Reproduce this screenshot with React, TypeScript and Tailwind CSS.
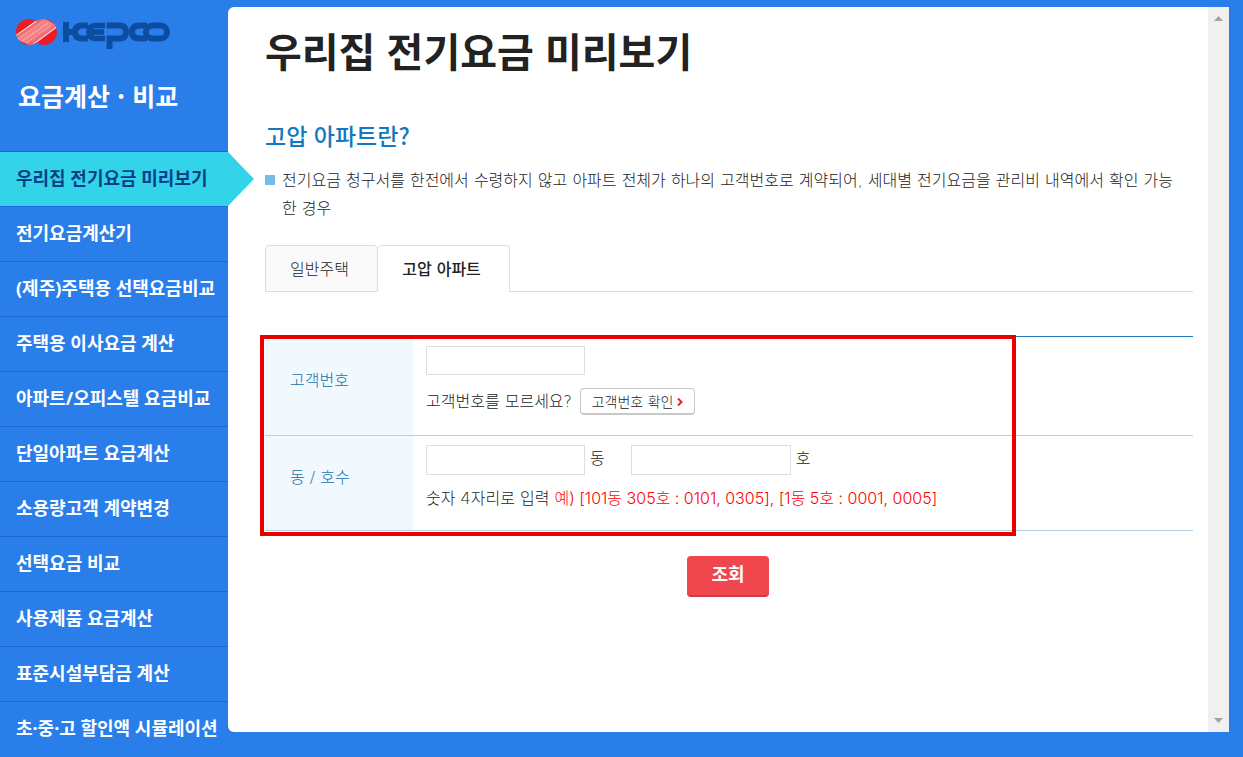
import React, { useState } from "react";

const menuItems = [
  "우리집 전기요금 미리보기",
  "전기요금계산기",
  "(제주)주택용 선택요금비교",
  "주택용 이사요금 계산",
  "아파트/오피스텔 요금비교",
  "단일아파트 요금계산",
  "소용량고객 계약변경",
  "선택요금 비교",
  "사용제품 요금계산",
  "표준시설부담금 계산",
  "초·중·고 할인액 시뮬레이션",
];

const tabs = ["일반주택", "고압 아파트"];

const KepcoLogo: React.FC = () => (
  <svg width="156" height="32" viewBox="0 0 156 32" role="img" aria-label="KEPCO">
    <defs>
      <clipPath id="discs">
        <circle cx="14" cy="15" r="13" />
        <circle cx="29" cy="15" r="13" />
      </clipPath>
      <linearGradient id="sheen" x1="0" y1="0" x2="1" y2="1">
        <stop offset="0.2" stopColor="#f04a50" />
        <stop offset="0.5" stopColor="#f58a8a" />
        <stop offset="0.8" stopColor="#f04a50" />
      </linearGradient>
    </defs>
    <g clipPath="url(#discs)">
      <rect width="44" height="30" fill="#ee1c25" />
      <path d="M-1 21L27 0L43 9L16 29z" fill="url(#sheen)" />
      <path
        d="M3 22L29 4M7 24L33 6M11 26L37 8"
        stroke="#fbd0d0"
        strokeWidth="1"
        strokeDasharray="1 1"
      />
      <path d="M-1 20L27 0M16 29L43 9" stroke="#e8d8e8" strokeWidth="1.2" />
    </g>
    <g fill="none" stroke="#0d4da1" strokeWidth="6">
      <path d="M51 5v20M73 8.500h-5q-8 0-8 6.500t8 6.500h5M51 15h9" />
      <path d="M90 8.500h-9q-7 0-7 6.500t7 6.500h9M75 15h14" strokeWidth="5.5" />
      <path d="M94.500 32V21.500h10q6.500 0 6.500-6.500t-6.500-6.500H91.500" />
      <path d="M132 8.500h-7q-8 0-8 6.500t8 6.500h7" />
      <rect x="131" y="8.500" width="21" height="13" rx="6.500" />
    </g>
  </svg>
);

const Sidebar: React.FC = () => (
  <aside className="w-[228px] shrink-0">
    <div className="h-[152px] border-b border-[#1a68d8] px-[15px] pt-[17px]">
      <KepcoLogo />
      <h2 className="mt-[26px] pl-[3px] text-[25px] font-bold leading-10 whitespace-nowrap text-white">
        요금계산 · 비교
      </h2>
    </div>
    <nav>
      <ul>
        {menuItems.map((item, i) => (
          <li
            key={item}
            className={
              i === 0
                ? "relative h-[55px] border-b border-[#1a68d8] bg-[#33d3ea] text-[#0b3f85]"
                : "h-[55px] border-b border-[#1a68d8] text-white last:border-b-0"
            }
          >
            <a
              href="#"
              className="block pl-4 font-['Noto_Sans','Noto_Sans_CJK_KR',sans-serif] text-[18px] font-bold leading-[52px] whitespace-nowrap"
            >
              {item}
            </a>
            {i === 0 && (
              <svg
                className="absolute top-0 left-full"
                width="26"
                height="54"
                viewBox="0 0 26 54"
                aria-hidden="true"
              >
                <path d="M0 0l26 27L0 54z" fill="#33d3ea" />
              </svg>
            )}
          </li>
        ))}
      </ul>
    </nav>
  </aside>
);

const Tabs: React.FC = () => {
  const [active, setActive] = useState(1);

  return (
    <div className="mt-[22px] flex h-[47px]" role="tablist">
      {tabs.map((tab, i) => (
        <button
          key={tab}
          role="tab"
          aria-selected={active === i}
          onClick={() => setActive(i)}
          className={
            active === i
              ? "w-[132px] rounded-t-sm border-t border-r border-[#dedede] bg-white pt-[2px] pr-1 text-base font-medium text-[#222]"
              : "w-[113px] rounded-t-sm border border-[#dcdcdc] bg-[#fafafa] pt-[2px] pr-1 text-base font-light text-[#222]"
          }
        >
          {tab}
        </button>
      ))}
      <div className="flex-1 border-b border-[#dcdcdc]" />
    </div>
  );
};

const CustomerForm: React.FC = () => (
  <form onSubmit={(e) => e.preventDefault()}>
    <div className="relative mt-11">
      <table className="w-full border-t border-[#1b7bbd] text-base font-light text-[#222]">
        <tbody>
          <tr className="h-[99px] border-b border-[#b8d0e0]">
            <th className="w-[148px] bg-[#f1f9ff] pb-[10px] pl-[25px] text-left font-light text-[#1770aa]">
              <label htmlFor="customer">고객번호</label>
            </th>
            <td className="pt-[9px] pl-[13px] align-top">
              <input
                id="customer"
                type="text"
                className="block h-[29px] w-[159px] border border-[#dedede] px-2"
              />
              <div className="mt-[13px] flex items-center gap-2">
                <span>고객번호를 모르세요?</span>
                <button
                  type="button"
                  className="flex h-[27px] w-[115px] items-center justify-center gap-1 rounded-sm border border-b-2 border-[#c8c8c8] bg-white pt-[2px] text-sm font-light"
                >
                  고객번호 확인
                  <svg width="6" height="8" viewBox="0 0 6 8" aria-hidden="true">
                    <path d="M1 0.500l3.500 3.500L1 7.500" fill="none" stroke="#e3262d" strokeWidth="2" />
                  </svg>
                </button>
              </div>
            </td>
          </tr>
          <tr className="h-[95px] border-b border-[#b8d0e0]">
            <th className="bg-[#f1f9ff] pb-[10px] pl-[25px] text-left font-light text-[#1770aa]">
              동 / 호수
            </th>
            <td className="pt-[9px] pl-[13px] align-top">
              <div className="flex items-center">
                <input
                  id="dong"
                  type="text"
                  className="h-[30px] w-[159px] border border-[#dedede] px-2"
                />
                <label htmlFor="dong" className="mr-[26px] ml-[5px] pb-[2px]">
                  동
                </label>
                <input
                  id="ho"
                  type="text"
                  className="h-[30px] w-[160px] border border-[#dedede] px-2"
                />
                <label htmlFor="ho" className="ml-[5px] pb-[2px]">
                  호
                </label>
              </div>
              <p className="mt-[11px]">
                숫자 4자리로 입력{" "}
                <span className="font-['Inter','Noto_Sans_CJK_KR',sans-serif] text-[#ff0000]">
                  예) [101동 305호 : 0101, 0305], [1동 5호 : 0001, 0005]
                </span>
              </p>
            </td>
          </tr>
        </tbody>
      </table>
      {/* Highlight around the fields to fill in */}
      <div className="pointer-events-none absolute -top-px -bottom-[5px] -left-[5px] w-[756px] border-4 border-[#eb0000]" />
    </div>
    <div className="mt-[25px] flex justify-center pr-[2px]">
      <button
        type="submit"
        className="h-[41px] w-[82px] rounded-sm border-b-2 border-[#cf3a42] bg-[#f0474f] pb-[2px] text-lg font-bold text-white"
      >
        조회
      </button>
    </div>
  </form>
);

const ScrollBar: React.FC = () => (
  <div className="flex w-[21px] shrink-0 flex-col items-center justify-between bg-[#f0f0f0] py-[9px]">
    <svg width="9" height="5" viewBox="0 0 9 5" aria-hidden="true">
      <path d="M0 5l4.500-5L9 5z" fill="#a3a3a3" />
    </svg>
    <svg width="9" height="5" viewBox="0 0 9 5" aria-hidden="true">
      <path d="M0 0l4.500 5L9 0z" fill="#a3a3a3" />
    </svg>
  </div>
);

export default function App() {
  return (
    <div
      lang="ko"
      className="flex min-h-screen bg-[#297eea] pr-[14px] font-['Noto_Sans_CJK_KR',sans-serif]"
    >
      <Sidebar />
      <div className="mt-[7px] mb-[25px] flex min-w-0 flex-1 overflow-hidden rounded-l-md bg-white">
        <main className="min-w-0 flex-1 pr-[15px] pl-[37px] font-['DejaVu_Sans','Noto_Sans_CJK_KR',sans-serif]">
          <h1 className="pt-[17px] font-['Noto_Sans_CJK_KR',sans-serif] text-[40px] font-bold leading-[52px] text-[#222]">
            우리집 전기요금 미리보기
          </h1>
          <h2 className="mt-[43px] font-['Noto_Sans_CJK_KR',sans-serif] text-[23px] font-medium leading-8 text-[#1478c0]">
            고압 아파트란?
          </h2>
          <div className="mt-4 flex gap-[7px] pr-2">
            <span className="mt-2 size-[10px] shrink-0 bg-[#74bde8]" />
            <p className="text-base font-light leading-7 break-all text-[#222]">
              전기요금 청구서를 한전에서 수령하지 않고 아파트 전체가 하나의 고객번호로 계약되어,
              세대별 전기요금을 관리비 내역에서 확인 가능한 경우
            </p>
          </div>
          <Tabs />
          <CustomerForm />
        </main>
        <ScrollBar />
      </div>
    </div>
  );
}
